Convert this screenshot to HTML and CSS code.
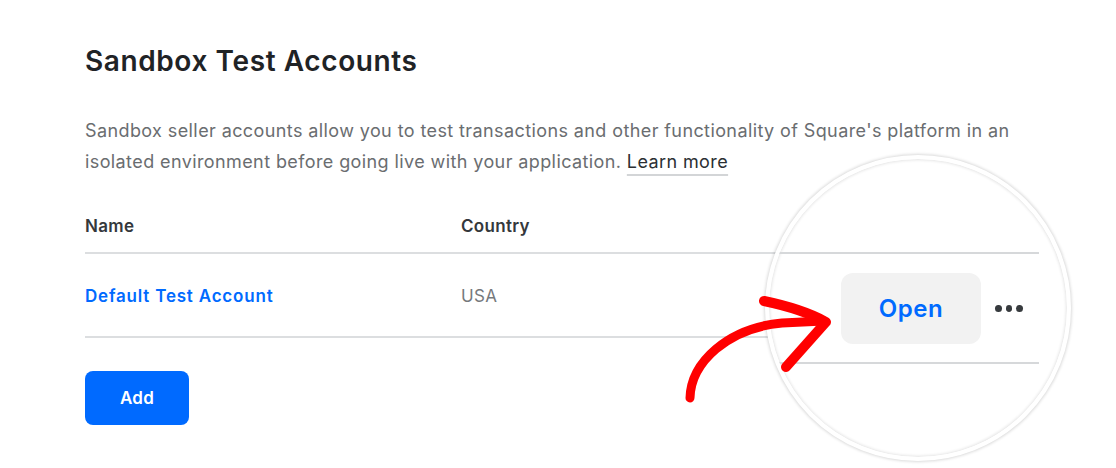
FILE: index.html
```html
<!DOCTYPE html>
<html lang="en">
<head>
  <meta charset="UTF-8">
  <title>Sandbox Test Accounts</title>
  <link rel="stylesheet" href="styles.css">
</head>
<body>

  <div class="page">
    <h1>Sandbox Test Accounts</h1>
    <p class="intro">
      Sandbox seller accounts allow you to test transactions and other functionality of Square's platform in an
      isolated environment before going live with your application. <a href="#" class="learn">Learn more</a>
    </p>

    <table class="accounts">
      <thead>
        <tr>
          <th class="col-name">Name</th>
          <th>Country</th>
        </tr>
      </thead>
      <tbody>
        <tr>
          <td class="col-name"><a href="#" class="acct-link">Default Test Account</a></td>
          <td class="country">USA</td>
        </tr>
      </tbody>
    </table>

    <button class="add-btn">Add</button>
  </div>

  <!-- magnifier over the row actions -->
  <div class="lens">
    <div class="lens-row">
      <button class="open-btn">Open</button>
      <span class="dots"><i></i><i></i><i></i></span>
    </div>
  </div>

  <svg class="arrow" width="180" height="130" viewBox="0 0 180 130">
    <path d="M20 118 C 21 82, 58 48, 112 43 L 154 41" fill="none" stroke="#ff0000" stroke-width="9" stroke-linecap="round"/>
    <path d="M94 21 C 118 26, 138 32, 156 42 L 116 87" fill="none" stroke="#ff0000" stroke-width="10" stroke-linecap="round" stroke-linejoin="round"/>
  </svg>

</body>
</html>
```

FILE: styles.css
```css
body {
  margin: 0;
  background: #fff;
  font-family: Inter, "Noto Sans", sans-serif;
  color: #1f2326;
}
.page {
  position: relative;
  padding: 44px 77px 0 85px;
}
h1 {
  margin: 0;
  font-size: 28px;
  line-height: 34px;
  font-weight: 600;
  letter-spacing: 0.6px;
  color: #1f2326;
}
.intro {
  margin: 37px 0 0;
  font-size: 18px;
  line-height: 31px;
  letter-spacing: 0.4px;
  color: #6a6d70;
}
.learn {
  color: #2b2f33;
  text-decoration: underline;
  text-decoration-color: #d3d5d7;
  text-decoration-thickness: 2px;
  text-underline-offset: 6px;
}
.accounts {
  width: 100%;
  margin-top: 23px;
  border-collapse: collapse;
}
.accounts th {
  height: 52px;
  padding: 0;
  text-align: left;
  vertical-align: middle;
  font-size: 17px;
  font-weight: 600;
  letter-spacing: 0.3px;
  color: #34383c;
  border-bottom: 2px solid #dcdee0;
}
.accounts td {
  height: 80px;
  padding: 2px 0 0;
  font-size: 17px;
  letter-spacing: 0.4px;
  vertical-align: middle;
  border-bottom: 2px solid #dcdee0;
}
.col-name {
  width: 376px;
}
.acct-link {
  color: #006aff;
  font-weight: 600;
  letter-spacing: 0.8px;
  text-decoration: none;
}
.country {
  color: #76797c;
}
.add-btn {
  margin-top: 33px;
  width: 104px;
  height: 54px;
  border: none;
  border-radius: 8px;
  background: #006aff;
  color: #fff;
  font-family: inherit;
  font-size: 17px;
  font-weight: 600;
  letter-spacing: 0.3px;
}

/* magnifier circle */
.lens {
  position: absolute;
  left: 765px;
  top: 155px;
  width: 306px;
  height: 306px;
  box-sizing: border-box;
  border: 4px solid #fff;
  border-radius: 50%;
  background: #fff;
  overflow: hidden;
  box-shadow: 0 0 3px 1px rgba(0, 0, 0, 0.15), inset 0 0 3px 1px rgba(0, 0, 0, 0.11);
}
.lens-row {
  width: 270px;
  margin-top: 93px;
  height: 112px;
  display: flex;
  align-items: center;
  justify-content: flex-end;
  padding-right: 16px;
  box-sizing: border-box;
  gap: 14px;
  border-top: 2px solid #d6d8da;
  border-bottom: 2px solid #d6d8da;
}
.open-btn {
  width: 140px;
  height: 71px;
  border: none;
  border-radius: 12px;
  background: #f2f2f2;
  color: #006aff;
  font-family: inherit;
  font-size: 24px;
  font-weight: 600;
  letter-spacing: 0.6px;
}
.dots {
  display: flex;
  gap: 4px;
  width: 28px;
}
.dots i {
  width: 7px;
  height: 7px;
  border-radius: 50%;
  background: #373b3e;
}
.arrow {
  position: absolute;
  left: 670px;
  top: 280px;
}
```
